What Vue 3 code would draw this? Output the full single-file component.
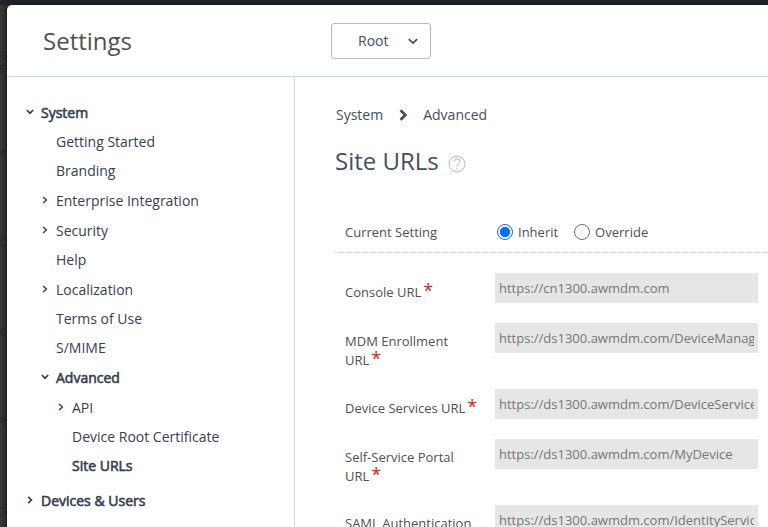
<script setup>
const nav = [
  { label: 'System', level: 0, state: 'open', bold: true },
  { label: 'Getting Started', level: 1 },
  { label: 'Branding', level: 1 },
  { label: 'Enterprise Integration', level: 1, state: 'closed' },
  { label: 'Security', level: 1, state: 'closed' },
  { label: 'Help', level: 1 },
  { label: 'Localization', level: 1, state: 'closed' },
  { label: 'Terms of Use', level: 1 },
  { label: 'S/MIME', level: 1 },
  { label: 'Advanced', level: 1, state: 'open', bold: true },
  { label: 'API', level: 2, state: 'closed' },
  { label: 'Device Root Certificate', level: 2 },
  { label: 'Site URLs', level: 2, bold: true },
  { label: 'Devices & Users', level: 0, state: 'closed', bold: true, section: true },
]

const fields = [
  { lines: ['Console URL'], value: 'https://cn1300.awmdm.com' },
  { lines: ['MDM Enrollment', 'URL'], value: 'https://ds1300.awmdm.com/DeviceManagement' },
  { lines: ['Device Services URL'], value: 'https://ds1300.awmdm.com/DeviceServices' },
  { lines: ['Self-Service Portal', 'URL'], value: 'https://ds1300.awmdm.com/MyDevice' },
  { lines: ['SAML Authentication', 'URL'], value: 'https://ds1300.awmdm.com/IdentityService' },
]
</script>

<template>
  <div class="page">
    <div class="topbar"></div>
    <div class="backdrop">
      <span class="ghost g1">G<br>ST</span>
      <span class="ghost g2">MO</span>
      <span class="ghost">D</span>
      <span class="ghost">C</span>
      <span class="ghost g2">PS</span>
      <span class="ghost g2">CO</span>
    </div>
    <div class="modal">
      <header class="header">
        <h1>Settings</h1>
        <button class="org" type="button">
          <span>Root</span>
          <svg width="10" height="7" viewBox="0 0 10 7"><path d="M.8 1.2 5 5.2 9.2 1.2" fill="none" stroke="#41505e" stroke-width="1.7" /></svg>
        </button>
      </header>
      <div class="body">
        <nav class="side">
          <div
            v-for="item in nav"
            :key="item.label"
            class="row"
            :class="['level' + item.level, { parent: item.state, bold: item.bold, section: item.section }]"
          >
            <span class="arrow">
              <svg v-if="item.state === 'open'" width="8" height="6" viewBox="0 0 8 6"><path d="M.8 1 4 4.2 7.2 1" /></svg>
              <svg v-else-if="item.state" class="closed" width="6" height="8" viewBox="0 0 6 8"><path d="M1.2 .9 4.4 4 1.2 7.1" /></svg>
            </span>
            <span class="text">{{ item.label }}</span>
          </div>
        </nav>
        <main class="main">
          <div class="crumbs">
            <span>System</span>
            <svg width="9" height="12" viewBox="0 0 9 12"><path d="M1.5 1.2 6.4 6 1.5 10.8" fill="none" stroke="#41505e" stroke-width="2.7" /></svg>
            <span>Advanced</span>
          </div>
          <div class="title">
            <h2>Site URLs</h2>
            <svg width="18" height="18" viewBox="0 0 18 18" fill="none" stroke="#c4c6c8">
              <circle cx="9" cy="9" r="7.9" stroke-width="1.2" />
              <path d="M6.1 6.7C6.1 4.8 7.3 3.9 9 3.9s2.9 1 2.9 2.6c0 2.1-2.8 2.2-2.8 4.5v.5" stroke-width="1.2" />
              <path d="M9.1 12.8v1.5" stroke-width="1.4" />
            </svg>
          </div>
          <div class="setting">
            <span class="caption">Current Setting</span>
            <span class="radio on"></span><span class="choice">Inherit</span>
            <span class="radio"></span><span class="choice">Override</span>
          </div>
          <div v-for="f in fields" :key="f.lines[0]" class="field" :class="{ tall: f.lines.length > 1 }">
            <label>
              <span v-for="(line, i) in f.lines" :key="line" class="line">{{ line }}<b v-if="i === f.lines.length - 1">*</b></span>
            </label>
            <div class="input"><div class="clip">{{ f.value }}</div></div>
          </div>
        </main>
      </div>
    </div>
  </div>
</template>

<style>
body { margin: 0; overflow: hidden; }
</style>

<style scoped>
.page {
  width: 768px; height: 527px; overflow: hidden;
  display: grid; grid-template: 5px 522px / 7px 761px;
  background: #323232; font-family: "Open Sans", sans-serif;
}
.topbar { grid-column: 1 / 3; background: #212426; }
.backdrop {
  overflow: hidden; display: flex; flex-direction: column;
  background: linear-gradient(90deg, #383838, #2b2b2b);
}
.ghost { height: 90px; flex: none; color: #262626; font-size: 10px; line-height: 14px; white-space: nowrap; }
.g1 { padding-top: 43px; height: 97px; }
.g1 { margin-left: -1px; }
.g2 { margin-left: -3px; }
.modal {
  background: #fff; border-top-left-radius: 5px; overflow: hidden;
  box-shadow: 0 0 4px rgba(0, 0, 0, .5);
}
.header {
  height: 71px; border-bottom: 1px solid #ccd8e1; box-sizing: content-box;
  display: flex; align-items: flex-start;
}
h1 {
  margin: 0; padding: 18px 0 0 36px; width: 288px;
  font-size: 24px; line-height: 36px; font-weight: 400; color: #505050;
}
.org {
  margin: 18px 0 0; width: 100px; height: 36px; padding: 0 12px 0 26px;
  display: flex; align-items: center; justify-content: space-between;
  border: 1px solid #bbb; border-radius: 3px; background: #fff;
  font: 14px "Open Sans", sans-serif; color: #41505e;
}
.org span { margin-top: -2px; }
.org svg { margin-top: 1px; }
.body { display: flex; height: 450px; }
.side { width: 287px; flex: none; border-right: 1px solid #ccd8e1; padding-top: 20px; }
.row {
  height: 29px; display: flex; align-items: center;
  color: #354150; font-size: 14px; white-space: nowrap;
}
.parent { padding-top: 1px; }
.section { margin-top: 5px; }
.level0 { padding-left: 18px; }
.level1 { padding-left: 33px; }
.level2 { padding-left: 49px; }
.arrow { width: 16px; height: 12px; flex: none; display: flex; align-items: center; margin-top: -2px; }
.arrow svg { margin-left: 1px; }
.arrow .closed { margin-left: 2px; }
.level2 .arrow .closed, .level0 .arrow .closed { margin-left: 1.5px; }
.arrow path { fill: none; stroke: #354150; stroke-width: 1.4; }
.bold .arrow path { stroke-width: 1.7; }
.bold .text { -webkit-text-stroke: .6px #354150; }
.main { flex: 1; padding-left: 40px; min-width: 0; color: #41505e; }
.crumbs { display: flex; align-items: center; height: 20px; padding: 27px 0 0 1px; font-size: 14px; }
.crumbs svg { margin: 2px 15px 0 16px; }
.title { display: flex; align-items: center; height: 34px; margin-top: 20px; }
h2 { margin: 0; font-size: 24px; line-height: 34px; font-weight: 400; }
.title svg { margin: 5px 0 0 9px; }
.setting {
  box-sizing: border-box; height: 42px; margin: 33px 0 20px; padding: 0 0 0 10px;
  display: flex; align-items: center; color: #505050; font-size: 13px;
  background: repeating-linear-gradient(90deg, #bbb 0 1px, transparent 1px 2px) 0 100% / 100% 1px no-repeat;
}
.caption { width: 152px; }
.radio { width: 14px; height: 14px; border: 1px solid #6f6f6f; border-radius: 50%; margin-right: 5px; }
.on { border-color: #0a6cff; background: radial-gradient(circle, #0a6cff 4.8px, #fff 5.4px); }
.choice { margin-right: 16px; }
.field { display: flex; height: 50px; padding-left: 10px; color: #505050; font-size: 13px; }
.tall { height: 66px; }
label { width: 150px; padding-top: 10px; flex: none; }
.tall label { padding-top: 9px; }
.line { display: block; height: 19px; line-height: 19px; white-space: nowrap; }
.line b { font-weight: 400; font-size: 18px; line-height: 0; color: #c92a1c; margin-left: 2px; vertical-align: 0; }
.input { width: 255px; height: 30px; padding: 0 4px; background: #e6e6e6; }
.clip { overflow: hidden; white-space: nowrap; line-height: 30px; font-size: 13px; color: #757575; }
</style>
